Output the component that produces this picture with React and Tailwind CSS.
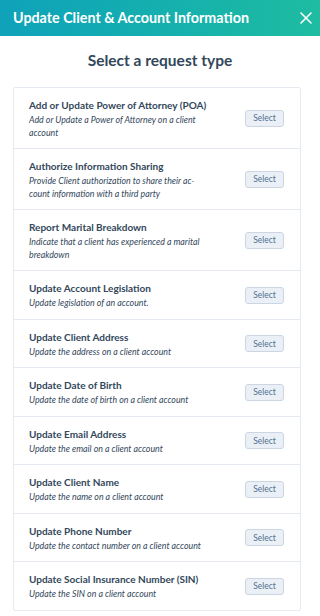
export default function App() {
  const items = [
    ["Add or Update Power of Attorney (POA)", "Add or Update a Power of Attorney on a client account"],
    ["Authorize Information Sharing", "Provide Client authorization to share their ac-count information with a third party"],
    ["Report Marital Breakdown", "Indicate that a client has experienced a marital breakdown"],
    ["Update Account Legislation", "Update legislation of an account."],
    ["Update Client Address", "Update the address on a client account"],
    ["Update Date of Birth", "Update the date of birth on a client account"],
    ["Update Email Address", "Update the email on a client account"],
    ["Update Client Name", "Update the name on a client account"],
    ["Update Phone Number", "Update the contact number on a client account"],
    ["Update Social Insurance Number (SIN)", "Update the SIN on a client account"],
  ];
  return (
    <div className="w-[320px] h-[616px] overflow-hidden bg-white" style={{ fontFamily: "Lato, 'Liberation Sans', sans-serif" }}>
      <div className="h-[36px] flex items-center justify-between pl-[13px] pr-[7px] bg-gradient-to-r from-[#0fa2ba] to-[#1ebca1]">
        <h1 className="text-white text-[14.3px] font-bold leading-none">Update Client &amp; Account Information</h1>
        <svg width="12" height="12" viewBox="0 0 12 12" className="mr-[1px]">
          <path d="M1 1 L11 11 M11 1 L1 11" stroke="white" strokeWidth="1.6" strokeLinecap="round" />
        </svg>
      </div>
      <h2 className="text-center text-[#33475b] text-[15.5px] font-bold leading-[20px] mt-[14px] mb-[17px]">Select a request type</h2>
      <div className="ml-[13px] w-[288px] border border-[#e5eaf0] rounded-[2px]">
        {items.map(([t, d], i) => (
          <div key={i} className={"flex items-center justify-between pl-[15px] pr-[16px] pt-[10px] pb-[9px] " + (i > 0 ? "border-t border-[#e5eaf0]" : "")}>
            <div className="flex-1">
              <div className="text-[#33475b] text-[10px] font-bold leading-[14px] whitespace-nowrap">{t}</div>
              <div className="w-[180px] mt-[2px] text-[#33475b] text-[8.8px] italic leading-[12.5px]">{d}</div>
            </div>
            <button className="w-[39px] h-[17px] rounded-[3px] border border-[#cbd6e2] bg-[#eaf0f6] text-[#516f90] text-[8.5px] leading-none">Select</button>
          </div>
        ))}
      </div>
    </div>
  );
}
